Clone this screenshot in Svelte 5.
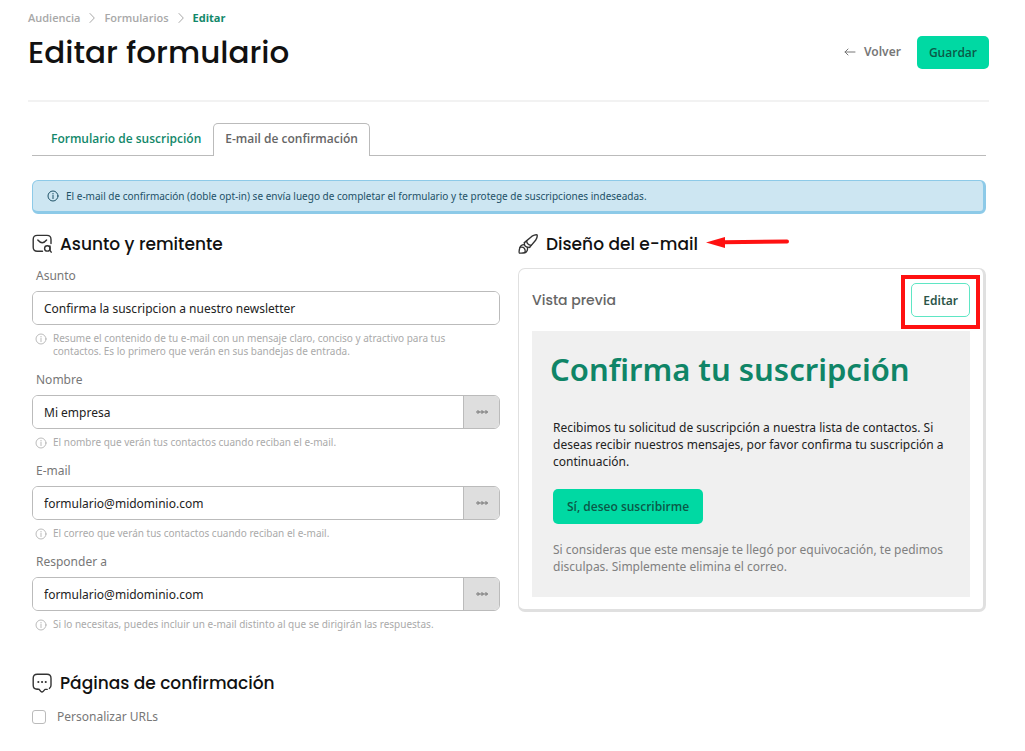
<script>
    let subject = "Confirma la suscripcion a nuestro newsletter"
    let fields = [
        { id: "name", label: "Nombre", value: "Mi empresa", help: "El nombre que verán tus contactos cuando reciban el e-mail." },
        { id: "email", label: "E-mail", value: "formulario@midominio.com", help: "El correo que verán tus contactos cuando reciban el e-mail." },
        { id: "reply_to", label: "Responder a", value: "formulario@midominio.com", help: "Si lo necesitas, puedes incluir un e-mail distinto al que se dirigirán las respuestas." }
    ]
    let custom_urls = false
</script>

{#snippet info_icon()}
    <svg class="info" viewBox="0 0 12 12" width="12" height="12" aria-hidden="true">
        <circle cx="6" cy="6" r="5" />
        <path d="M6 5.4V8.6M6 3.4V4" />
    </svg>
{/snippet}

{#snippet chevron()}
    <svg class="chevron" viewBox="0 0 8 12" width="8" height="12" aria-hidden="true">
        <path d="M2 1.5L6.3 6L2 10.5" />
    </svg>
{/snippet}

<main>
    <header>
        <nav class="breadcrumb" aria-label="Ruta">
            <a href="#audiencia">Audiencia</a>
            {@render chevron()}
            <a href="#formularios">Formularios</a>
            {@render chevron()}
            <span class="current">Editar</span>
        </nav>
        <div class="title_row">
            <h1>Editar formulario</h1>
            <div class="actions">
                <a class="back" href="#volver">
                    <svg viewBox="0 0 12 10" width="12" height="10" aria-hidden="true">
                        <path d="M11 5H1M4 2L1 5L4 8" />
                    </svg>
                    Volver
                </a>
                <button class="primary save" type="button">Guardar</button>
            </div>
        </div>
    </header>

    <div class="content">
        <nav class="tabs" aria-label="Secciones">
            <a class="tab" href="#formulario">Formulario de suscripción</a>
            <a class="tab active" href="#confirmacion" aria-current="page">E-mail de confirmación</a>
        </nav>

        <div class="alert">
            {@render info_icon()}
            <p>El e-mail de confirmación (doble opt-in) se envía luego de completar el formulario y te protege de suscripciones indeseadas.</p>
        </div>

        <div class="columns">
            <section>
                <h2>
                    <svg viewBox="0 0 20 20" width="20" height="20" aria-hidden="true">
                        <path d="M10.5 17.2H5.2Q1.2 17.2 1.2 13.2V5.4Q1.2 1.4 5.2 1.4H15Q19 1.4 19 5.4V9.6" />
                        <path d="M5.8 6Q10.2 11.4 14.6 6" />
                        <circle cx="15.3" cy="14.4" r="2.7" />
                        <path d="M18 12V16.4L19.2 18.2" />
                    </svg>
                    Asunto y remitente
                </h2>
                <div class="field">
                    <label for="subject">Asunto</label>
                    <div class="control">
                        <input id="subject" type="text" bind:value={subject}>
                    </div>
                    <div class="help">
                        {@render info_icon()}
                        <p>Resume el contenido de tu e-mail con un mensaje claro, conciso y atractivo para tus contactos. Es lo primero que verán en sus bandejas de entrada.</p>
                    </div>
                </div>
                {#each fields as field}
                    <div class="field">
                        <label for={field.id}>{field.label}</label>
                        <div class="control">
                            <input id={field.id} type="text" bind:value={field.value}>
                            <button class="more" type="button" aria-label="Más opciones">
                                <svg viewBox="0 0 14 4" width="14" height="4" aria-hidden="true">
                                    <circle cx="3" cy="2" r="1.2" />
                                    <circle cx="7" cy="2" r="1.2" />
                                    <circle cx="11" cy="2" r="1.2" />
                                </svg>
                            </button>
                        </div>
                        <div class="help">
                            {@render info_icon()}
                            <p>{field.help}</p>
                        </div>
                    </div>
                {/each}
            </section>

            <section>
                <h2>
                    <svg viewBox="0 0 20 20" width="20" height="20" aria-hidden="true">
                        <path d="M6.4 8.6L14 2.2Q17.6.2 19 .9Q19.8 2.4 17.8 6L11.6 13.4" />
                        <path d="M6.4 8.6Q5.6 13.4 11.6 13.4" />
                        <path d="M8.6 6.8Q8.8 10.8 13.2 11.4" />
                        <path d="M6.2 10.6Q2.2 10.6 1.4 15.4Q.8 18.8 1.4 19.1Q7 19.4 8.4 17.8Q10 16 9.4 13.4" />
                        <path d="M2 13.4Q4.8 12.6 6.4 14.4Q7.8 16.4 7 18.6" />
                    </svg>
                    Diseño del e-mail
                    <svg class="arrow" viewBox="0 0 84 12" width="84" height="12" aria-hidden="true">
                        <path class="head" d="M0 4.5L19 -1V10Z" />
                        <path class="shaft" d="M17 4.2L81 3.5" />
                    </svg>
                </h2>
                <div class="card">
                    <div class="card_top">
                        <h3>Vista previa</h3>
                        <div class="highlighted">
                            <button class="edit" type="button">Editar</button>
                        </div>
                    </div>
                    <article class="preview">
                        <h4>Confirma tu suscripción</h4>
                        <div class="message">
                            <p>Recibimos tu solicitud de suscripción a nuestra lista de contactos. Si deseas recibir nuestros mensajes, por favor confirma tu suscripción a continuación.</p>
                            <button class="primary subscribe" type="button">Sí, deseo suscribirme</button>
                            <p class="footnote">Si consideras que este mensaje te llegó por equivocación, te pedimos disculpas. Simplemente elimina el correo.</p>
                        </div>
                    </article>
                </div>
            </section>
        </div>

        <section class="pages">
            <h2>
                <svg viewBox="0 0 20 20" width="20" height="20" aria-hidden="true">
                    <path d="M5.2 16.2Q1.2 16 1.2 12.2V5.2Q1.2 1.2 5.2 1.2H15Q19 1.2 19 5.2V12.2Q19 14.4 17.4 15.4" />
                    <path d="M5.2 16.2H7L9 18.6Q10 19.6 11 18.6L13 16.4H15.2" />
                    <path class="dots" d="M6.3 9H6.4M10 9H10.1M13.7 9H13.8" />
                </svg>
                Páginas de confirmación
            </h2>
            <label class="check">
                <input type="checkbox" bind:checked={custom_urls}>
                Personalizar URLs
            </label>
        </section>
    </div>
</main>

<style>
    :global(body) {
        margin: 0;
        background: #fff;
    }

    main {
        padding: 10px 36px 24px 28px;
        font-family: "Noto Sans", "Open Sans", sans-serif;
        font-size: 12px;
        line-height: 16px;
        color: #333;
    }

    h1, h2, h3, h4, p {
        margin: 0;
    }

    h1, h2, h3 {
        font-family: Poppins, Inter, sans-serif;
        font-weight: 500;
        color: #111;
    }

    a {
        text-decoration: none;
    }

    button, input {
        font-family: inherit;
        font-size: inherit;
        box-sizing: border-box;
        margin: 0;
    }

    button {
        cursor: pointer;
    }

    svg {
        flex: none;
        fill: none;
        stroke: currentColor;
        stroke-linecap: round;
        stroke-linejoin: round;
    }

    header {
        border-bottom: 2px solid #f2f2f2;
        padding-bottom: 28px;
    }

    .breadcrumb, .tab, .primary {
        font-family: "Open Sans", sans-serif;
        font-weight: 600;
    }

    .breadcrumb {
        display: flex;
        align-items: center;
        gap: 8px;
        font-size: 11px;
    }

    .breadcrumb a, .chevron {
        color: #a8a8a8;
    }

    .current {
        color: #12886a;
        font-weight: 700;
    }

    .title_row {
        display: flex;
        align-items: center;
        justify-content: space-between;
        padding-top: 6px;
    }

    h1 {
        font-size: 31px;
        line-height: 40px;
    }

    .actions {
        display: flex;
        align-items: center;
        gap: 16px;
    }

    .back {
        display: flex;
        align-items: center;
        gap: 8px;
        font-weight: 600;
        color: #777;
    }

    .primary {
        border: none;
        border-radius: 5px;
        background: #00d9a3;
        color: #0b5a48;
    }

    .save {
        height: 33px;
        padding: 0 12px;
    }

    .content {
        padding: 21px 3px 0 4px;
    }

    .tabs {
        display: flex;
        border-bottom: 1px solid #bbb;
    }

    .tab {
        padding: 7px 11px 8px;
        border: 1px solid transparent;
        border-bottom: none;
        border-radius: 5px 5px 0 0;
        color: #12886a;
    }

    .tab:first-child {
        padding-left: 18px;
    }

    .tab.active {
        margin-bottom: -1px;
        padding-bottom: 9px;
        border-color: #bbb;
        background: #fff;
        color: #666;
    }

    .alert {
        display: flex;
        align-items: center;
        gap: 7px;
        margin-top: 24px;
        padding: 7px 14px;
        border: 1px solid #8dcae8;
        border-right-width: 3px;
        border-bottom-width: 3px;
        border-radius: 6px;
        background: #cde6f2;
        color: #1d5167;
        font-size: 10px;
    }

    .columns {
        display: grid;
        grid-template-columns: 1fr 1fr;
        gap: 18px;
        margin-top: 18px;
    }

    h2 {
        display: flex;
        align-items: center;
        gap: 8px;
        margin-bottom: 12px;
        font-size: 17px;
        line-height: 24px;
    }

    h2 svg {
        stroke-width: 1.4;
        color: #333;
    }

    .dots {
        stroke-width: 2;
    }

    h2 .arrow {
        color: #f11;
        overflow: visible;
    }

    .head {
        fill: currentColor;
        stroke: none;
    }

    .shaft {
        stroke-width: 4;
    }

    .field {
        margin-bottom: 14px;
    }

    .field:last-child {
        margin-bottom: 0;
    }

    .field label {
        display: block;
        padding-left: 4px;
        color: #777;
    }

    .control {
        display: flex;
        height: 34px;
        box-sizing: border-box;
        margin: 7px 0;
        border: 1px solid #bbb;
        border-radius: 6px;
        overflow: hidden;
    }

    .control input {
        flex: 1;
        min-width: 0;
        padding: 0 11px;
        border: none;
        background: #fff;
        color: #222;
    }

    .more {
        width: 36px;
        padding: 0;
        border: none;
        border-left: 1px solid #bbb;
        background: #dedede;
        color: #777;
    }

    .more svg {
        display: block;
        margin: 0 auto;
    }

    .help {
        display: flex;
        gap: 6px;
        padding: 0 32px 0 3px;
        color: #aaa;
        font-size: 10px;
        line-height: 13px;
    }

    .help .info {
        margin-top: 1px;
        stroke-width: .8;
    }

    .card {
        padding: 14px 13px 12px;
        border: 1px solid #e0e0e0;
        border-right-width: 3px;
        border-bottom-width: 3px;
        border-radius: 7px;
    }

    .card_top {
        display: flex;
        align-items: center;
        justify-content: space-between;
        margin-bottom: 14px;
    }

    h3 {
        font-size: 14px;
        color: #666;
    }

    .highlighted {
        position: relative;
    }

    .highlighted::after {
        content: "";
        position: absolute;
        inset: -8px -10px -12px;
        border: 4px solid #f11;
        pointer-events: none;
    }

    .edit {
        display: block;
        height: 34px;
        padding: 0 11px;
        border: 1px solid #5fe6c4;
        border-radius: 5px;
        background: #fff;
        color: #2c5549;
        font-weight: 600;
    }

    .preview {
        padding: 18px 18px 22px;
        background: #f0f0f0;
    }

    h4 {
        font-size: 31px;
        line-height: 40px;
        font-weight: 600;
        color: #0f8567;
    }

    .message {
        padding: 30px 0 0 3px;
        line-height: 17px;
        color: #222;
    }

    .subscribe {
        display: block;
        height: 35px;
        margin: 19px 0 17px;
        padding: 0 14px;
    }

    .footnote {
        color: #808080;
    }

    .pages {
        margin-top: 40px;
    }

    .check {
        display: inline-flex;
        align-items: center;
        gap: 11px;
        padding-top: 2px;
        color: #777;
    }

    .check input {
        appearance: none;
        width: 14px;
        height: 14px;
        border: 1px solid #bbb;
        border-radius: 3px;
        background: #fff;
    }

    .check input:checked {
        border-color: #12886a;
        background: #00d9a3;
    }
</style>
